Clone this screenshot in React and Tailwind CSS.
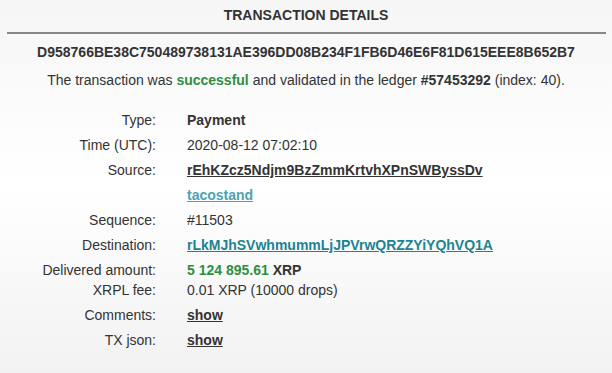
const rows = [
  { label: 'Type:', value: <span className="font-bold">Payment</span> },
  { label: 'Time (UTC):', value: '2020-08-12 07:02:10' },
  {
    label: 'Source:',
    value: <a className="font-bold underline text-[#333]">rEhKZcz5Ndjm9BzZmmKrtvhXPnSWByssDv</a>,
  },
  { label: '', value: <a className="font-bold underline text-[#4aa3b5]">tacostand</a> },
  { label: 'Sequence:', value: '#11503' },
  {
    label: 'Destination:',
    value: <a className="font-bold underline text-[#1c8393]">rLkMJhSVwhmummLjJPVrwQRZZYiYQhVQ1A</a>,
  },
  {
    label: 'Delivered amount:',
    value: (
      <span className="font-bold">
        <span className="text-[#2f8f3f]">5 124 895.61</span> XRP
      </span>
    ),
    short: true,
  },
  { label: 'XRPL fee:', value: '0.01 XRP (10000 drops)' },
  { label: 'Comments:', value: <a className="font-bold underline text-[#333]">show</a> },
  { label: 'TX json:', value: <a className="font-bold underline text-[#333]">show</a> },
]

export default function App() {
  return (
    <div
      className="w-[612px] h-[373px] overflow-hidden text-[14px] leading-[20px] text-[#333] bg-gradient-to-b from-[#f6f6f6] via-white to-[#f2f2f2]"
      style={{ fontFamily: '"Liberation Sans", Arial, sans-serif' }}
    >
      {/* header */}
      <div className="pt-[5px] pb-[7px] text-center font-bold">TRANSACTION DETAILS</div>
      <div className="mx-[7px] mr-[6px] h-[2px] bg-[#888]"></div>

      <div className="mt-[8px] text-center font-bold">
        D958766BE38C750489738131AE396DD08B234F1FB6D46E6F81D615EEE8B652B7
      </div>
      <div className="mt-[8px] text-center">
        The transaction was <span className="font-bold text-[#2f8f3f]">successful</span> and
        validated in the ledger <span className="font-bold">#57453292</span> (index: 40).
      </div>

      {/* details table */}
      <div className="mt-[20px] flex flex-col">
        {rows.map((r, i) => (
          <div key={i} className={`flex ${r.short ? 'h-[20px]' : 'h-[25px]'}`}>
            <div className="w-[156px] text-right">{r.label}</div>
            <div className="pl-[31px] whitespace-nowrap">{r.value}</div>
          </div>
        ))}
      </div>
    </div>
  )
}
